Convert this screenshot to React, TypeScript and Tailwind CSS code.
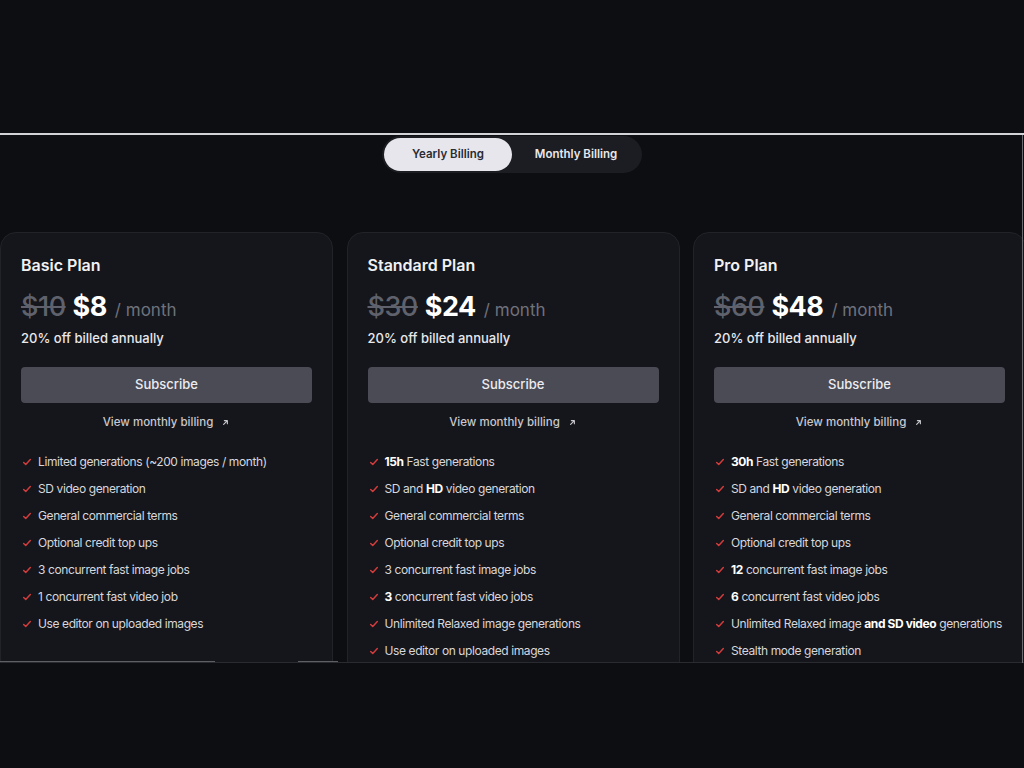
import React from "react";

type Feature = React.ReactNode;

const Check = () => (
  <svg width="10" height="10" viewBox="0 0 24 24" fill="none" stroke="#d23c3c" strokeWidth="3.5" strokeLinecap="round" strokeLinejoin="round" className="shrink-0">
    <path d="M4 13l5 5L20 6" />
  </svg>
);

const Arrow = () => (
  <svg width="9" height="9" viewBox="0 0 24 24" fill="none" stroke="currentColor" strokeWidth="3" strokeLinecap="round" strokeLinejoin="round">
    <path d="M7 17L17 7M9 7h8v8" />
  </svg>
);

const B = ({ children }: { children: React.ReactNode }) => (
  <span className="font-bold text-white">{children}</span>
);

const plans: { name: string; old: string; price: string; features: Feature[] }[] = [
  {
    name: "Basic Plan",
    old: "$10",
    price: "$8",
    features: [
      "Limited generations (~200 images / month)",
      "SD video generation",
      "General commercial terms",
      "Optional credit top ups",
      "3 concurrent fast image jobs",
      "1 concurrent fast video job",
      "Use editor on uploaded images",
    ],
  },
  {
    name: "Standard Plan",
    old: "$30",
    price: "$24",
    features: [
      <><B>15h</B> Fast generations</>,
      <>SD and <B>HD</B> video generation</>,
      "General commercial terms",
      "Optional credit top ups",
      "3 concurrent fast image jobs",
      <><B>3</B> concurrent fast video jobs</>,
      "Unlimited Relaxed image generations",
      "Use editor on uploaded images",
    ],
  },
  {
    name: "Pro Plan",
    old: "$60",
    price: "$48",
    features: [
      <><B>30h</B> Fast generations</>,
      <>SD and <B>HD</B> video generation</>,
      "General commercial terms",
      "Optional credit top ups",
      <><B>12</B> concurrent fast image jobs</>,
      <><B>6</B> concurrent fast video jobs</>,
      <>Unlimited Relaxed image <B>and SD video</B> generations</>,
      "Stealth mode generation",
    ],
  },
];

export default function App() {
  return (
    <div
      className="w-[1024px] h-[768px] bg-[#0d0e12] flex flex-col overflow-hidden"
      style={{ fontFamily: "Inter, 'Noto Sans', sans-serif" }}
    >
      <div className="h-[133px] shrink-0" />
      <div className="relative h-[530px] shrink-0 border-t-2 border-[#d2d3d7] overflow-hidden">
        <div className="absolute right-[1px] top-0 bottom-0 w-px bg-[#6a6b70] z-10" />
        <div className="flex justify-center pt-[1px]">
          <div className="flex items-center h-[37px] rounded-full bg-[#1c1d22] p-[2px] w-[260px]">
            <div className="h-[33px] w-[128px] rounded-full bg-[#e6e6ec] flex items-center justify-center text-[11.5px] font-semibold text-[#2a2b33]">
              Yearly Billing
            </div>
            <div className="flex-1 flex items-center justify-center text-[11.5px] font-semibold text-[#e8e8ee]">
              Monthly Billing
            </div>
          </div>
        </div>
        <div className="grid grid-cols-[333px_333px_333px] gap-[13.5px] mt-[59px] w-[1027px]">
          {plans.map((p) => (
            <div
              key={p.name}
              className="h-[450px] rounded-2xl bg-[#15161b] border border-[#222328] px-5 pt-5"
            >
              <div className="text-[16px] leading-6 font-semibold text-[#f1f1f4]">{p.name}</div>
              <div className="flex items-baseline mt-[10px] h-[38px]">
                <span className="text-[27px] font-medium text-[#5f626c] line-through decoration-2 tracking-[-0.5px]">{p.old}</span>
                <span className="text-[27px] font-bold text-white ml-[7px] tracking-[-0.5px]">{p.price}</span>
                <span className="text-[17px] text-[#6f727c] ml-[8px]">/ month</span>
              </div>
              <div className="text-[13px] font-medium text-[#e8e8ec] mt-[3px] leading-5">20% off billed annually</div>
              <button className="mt-[19px] w-full h-[36px] rounded-[4px] bg-[#4a4b55] text-[13px] font-medium text-[#ececf0]">
                Subscribe
              </button>
              <div className="mt-[11px] flex items-center justify-center gap-[8px] text-[11.5px] font-medium text-[#c8c8ce]">
                View monthly billing <Arrow />
              </div>
              <ul className="mt-[23px] flex flex-col gap-[11px]">
                {p.features.map((f, i) => (
                  <li key={i} className="flex items-center gap-[6px] pl-[1px] text-[12px] leading-4 text-[#d7d7dc] whitespace-nowrap tracking-[-0.4px]">
                    <Check />
                    <span>{f}</span>
                  </li>
                ))}
              </ul>
            </div>
          ))}
        </div>
        <div className="absolute left-0 bottom-0 w-[215px] h-[2px] bg-[#5e5f64]" />
        <div className="absolute left-[298px] bottom-0 w-[40px] h-[2px] bg-[#5e5f64]" />
        <div className="absolute left-0 right-0 bottom-0 h-px bg-[#2a2b30]" />
      </div>
      <div className="flex-1" />
    </div>
  );
}
